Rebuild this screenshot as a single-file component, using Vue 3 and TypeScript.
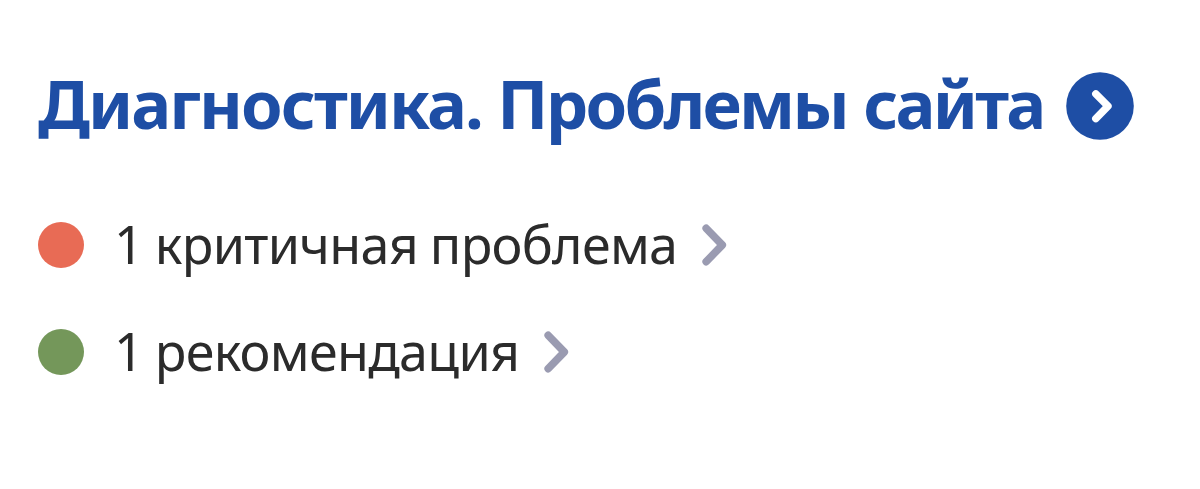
<template>
  <main class="diagnostics">
    <h1 class="title">
      <a href="#diagnostics">
        <span class="title-text"><span class="section">Диагностика. </span><span class="subject">Проблемы сайта</span></span>
        <svg class="title-icon" viewBox="0 0 68 68" aria-hidden="true">
          <circle cx="34" cy="34" r="33.8" />
          <path d="M29.8 21.8 42 34.2 29.8 46.6" />
        </svg>
      </a>
    </h1>
    <ul class="problems">
      <li v-for="item in problems" :key="item.level">
        <a :href="`#${item.level}`">
          <span class="dot" :class="item.level"></span>
          <span class="label">{{ item.text }}</span>
          <svg class="chevron" viewBox="0 0 25 42" aria-hidden="true">
            <path d="M4.2 4.3 20.3 21 4.2 37.7" />
          </svg>
        </a>
      </li>
    </ul>
  </main>
</template>

<script setup lang="ts">
interface Problem {
  level: 'critical' | 'recommendation';
  text: string;
}

const problems: Problem[] = [
  { level: 'critical', text: '1 критичная проблема' },
  { level: 'recommendation', text: '1 рекомендация' },
];
</script>

<style>
body {
  margin: 0;
  background: #fff;
}
</style>

<style scoped>
.diagnostics {
  box-sizing: border-box;
  height: 489px;
  padding: 66px 38px 0;
  overflow: hidden;
  font-family: 'Noto Sans', 'Open Sans', sans-serif;
}

a {
  display: flex;
  align-items: center;
  color: inherit;
  text-decoration: none;
  white-space: nowrap;
}

.title {
  height: 80px;
  margin: 0;
  color: #1e4ea5;
  font-size: 67px;
  font-weight: 700;
  line-height: 74px;
}

.title a {
  height: 80px;
}

.title-text {
  padding-bottom: 6px;
}

.section {
  letter-spacing: -1.95px;
}

.subject {
  letter-spacing: -2.7px;
  word-spacing: 1.5px;
}

.title-icon {
  flex: none;
  width: 68px;
  height: 68px;
  margin-left: 22px;
}

.title-icon circle {
  fill: #1e4ea5;
}

.title-icon path {
  fill: none;
  stroke: #fff;
  stroke-width: 7.4;
  stroke-linecap: round;
  stroke-linejoin: round;
}

.problems {
  margin: 46px 0 0;
  padding: 0;
  list-style: none;
}

.problems li {
  height: 107px;
}

.problems a {
  height: 106px;
  color: #2b2b2b;
  font-size: 52px;
  letter-spacing: -0.7px;
  word-spacing: -1px;
}

.label {
  padding-bottom: 4px;
}

.dot {
  flex: none;
  width: 46px;
  height: 46px;
  margin-right: 30px;
  border-radius: 50%;
}

.dot.critical {
  background: #e86b55;
}

.dot.recommendation {
  background: #74975a;
}

.chevron {
  flex: none;
  width: 25px;
  height: 42px;
  margin-left: 25px;
}

.chevron path {
  fill: none;
  stroke: #9a9bb1;
  stroke-width: 7.6;
  stroke-linecap: round;
  stroke-linejoin: round;
}
</style>
